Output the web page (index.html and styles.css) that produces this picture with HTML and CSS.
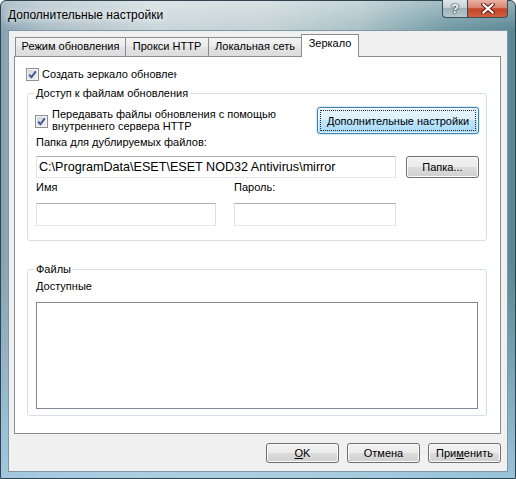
FILE: index.html
```html
<!DOCTYPE html>
<html lang="ru">
<head>
<meta charset="utf-8">
<title>Дополнительные настройки</title>
<link rel="stylesheet" href="styles.css">
</head>
<body>
<div class="window">
  <div class="titlebar">
    <span class="title">Дополнительные настройки</span>
    <div class="caption-buttons">
      <div class="cap-btn help">?</div>
      <div class="cap-btn close">
        <svg width="14" height="11" viewBox="0 0 14 11">
          <path d="M2.5 1.5 L11.5 9.5 M11.5 1.5 L2.5 9.5" stroke="#5a1a10" stroke-width="4.2" stroke-linecap="square"/>
          <path d="M2.5 1.5 L11.5 9.5 M11.5 1.5 L2.5 9.5" stroke="#ffffff" stroke-width="2.2" stroke-linecap="square"/>
        </svg>
      </div>
    </div>
  </div>
  <div class="client">
    <div class="tabs">
      <div class="tab t1">Режим обновления</div>
      <div class="tab t2">Прокси HTTP</div>
      <div class="tab t3">Локальная сеть</div>
      <div class="tab active">Зеркало</div>
    </div>
    <div class="panel">
      <label class="check top-check">
        <span class="box"><svg width="11" height="11" viewBox="0 0 11 11"><path d="M2.2 5.6 L4.4 8.2 L8.8 2.4" fill="none" stroke="#3f5690" stroke-width="1.9"/></svg></span>
        <span class="clip">Создать зеркало обновления</span>
      </label>
      <fieldset class="group access">
        <legend>Доступ к файлам обновления</legend>
        <div class="http-row">
          <label class="check multi">
            <span class="box"><svg width="11" height="11" viewBox="0 0 11 11"><path d="M2.2 5.6 L4.4 8.2 L8.8 2.4" fill="none" stroke="#3f5690" stroke-width="1.9"/></svg></span>
            <span class="multi-text">Передавать файлы обновления с помощью<br>внутреннего сервера HTTP</span>
          </label>
          <button class="btn default"><span>Дополнительные настройки</span></button>
        </div>
        <div class="label folder-label">Папка для дублируемых файлов:</div>
        <div class="path-row">
          <div class="input path">C:\ProgramData\ESET\ESET NOD32 Antivirus\mirror</div>
          <button class="btn folder">Папка...</button>
        </div>
        <div class="creds">
          <div class="field name">
            <div class="label">Имя</div>
            <div class="input cred"></div>
          </div>
          <div class="field pass">
            <div class="label">Пароль:</div>
            <div class="input cred"></div>
          </div>
        </div>
      </fieldset>
      <fieldset class="group files">
        <legend>Файлы</legend>
        <div class="label">Доступные</div>
        <div class="listbox"></div>
      </fieldset>
    </div>
    <div class="buttons">
      <button class="btn"><u>O</u>K</button>
      <button class="btn">Отмена</button>
      <button class="btn">При<u>м</u>енить</button>
    </div>
  </div>
</div>
</body>
</html>
```

FILE: styles.css
```css
* { box-sizing: border-box; }
html, body { margin: 0; padding: 0; }
body {
  width: 516px;
  height: 479px;
  overflow: hidden;
  background: #ffffff;
  font-family: "Liberation Sans", Arial, sans-serif;
  font-size: 11px;
  color: #000;
}

.window {
  width: 516px;
  height: 479px;
  display: flex;
  flex-direction: column;
  border: 1px solid #2f4350;
  border-radius: 6px 6px 0 0;
  background:
    linear-gradient(to bottom, rgba(255,255,255,0.35) 0, rgba(255,255,255,0) 30px),
    linear-gradient(to bottom, rgba(165,205,228,0) 55%, rgba(165,205,228,0.85) 100%),
    linear-gradient(to right, #87a2b2 0%, #a9bcc5 8%, #c9d6d9 30%, #c3d1d4 52%, #a8c0c6 70%, #6f98a2 87%, #588894 100%);
}

.titlebar {
  height: 29px;
  flex: none;
  display: flex;
  justify-content: space-between;
  align-items: flex-start;
}
.title {
  font-size: 12px;
  line-height: 16px;
  padding: 6px 0 0 7px;
  text-shadow: 0 0 6px rgba(255,255,255,0.9), 0 0 10px rgba(255,255,255,0.7);
}
.caption-buttons {
  display: flex;
  margin: -1px 7px 0 0;
}
.cap-btn {
  height: 18px;
  display: flex;
  align-items: center;
  justify-content: center;
  border: 1px solid #3b4d58;
  border-top: none;
}
.help {
  width: 25px;
  border-right: none;
  border-radius: 0 0 0 4px;
  background: linear-gradient(#dfe7ea, #c3d1d6 45%, #9fb3ba 50%, #b4c7cc);
  color: #fff;
  font-weight: bold;
  font-size: 13px;
  text-shadow: 0 0 1px #2c3a44, 0 0 1px #2c3a44, 0 0 2px #2c3a44;
}
.close {
  width: 41px;
  border-radius: 0 0 4px 0;
  background: linear-gradient(#eab1a2, #d98570 45%, #c4432a 52%, #d0613d);
}

.client {
  flex: 1;
  margin: 0 7px 6px 7px;
  background: #f0f0f0;
  border: 1px solid #7f96a5;
  padding: 3px 6px 8px 5px;
  display: flex;
  flex-direction: column;
}

.tabs {
  flex: none;
  height: 22px;
  margin-left: 1px;
  display: flex;
  align-items: flex-end;
  position: relative;
  z-index: 1;
}
.tab {
  height: 19px;
  border: 1px solid #898c95;
  border-bottom: none;
  background: linear-gradient(#f4f4f4, #e9e9e9 50%, #e3e3e3 50%, #dcdcdc);
  text-align: center;
  line-height: 17px;
  white-space: nowrap;
}
.tab + .tab { margin-left: -1px; }
.t1 { width: 111px; }
.t2 { width: 84px; }
.t3 { width: 94px; }
.tab.active {
  width: 58px;
  height: 23px;
  margin-bottom: -1px;
  background: #ffffff;
  line-height: 17px;
}

.panel {
  flex: none;
  height: 378px;
  background: #ffffff;
  border: 1px solid #898c95;
  padding: 10px 13px 0 12px;
  display: flex;
  flex-direction: column;
}

.check {
  display: flex;
  align-items: flex-start;
  gap: 3px;
}
.box {
  flex: none;
  width: 13px;
  height: 13px;
  border: 1px solid #8e8f8f;
  background: linear-gradient(135deg, #cdd3dc, #f3f4f6);
  box-shadow: inset 0 0 0 1px #f4f4f4;
  display: flex;
  align-items: center;
  justify-content: center;
}
.top-check {
  height: 14px;
  line-height: 14px;
  margin-left: -1px;
}
.top-check .box { margin-top: 1px; }
.clip {
  width: 135px;
  overflow: hidden;
  white-space: nowrap;
}

.group {
  margin: 5px 0 0 0;
  padding: 7px 7px 14px 8px;
  border: 1px solid #d5dfe5;
  border-radius: 3px;
  min-width: 0;
}
.group legend {
  padding: 0 2px;
  margin-left: -2px;
  line-height: 14px;
}
.files {
  margin-top: 21px;
  padding: 4px 7px 6px 8px;
}

.http-row {
  height: 27px;
  display: flex;
  justify-content: space-between;
  align-items: flex-start;
}
.multi {
  margin: 1px 0 0 -1px;
  gap: 4px;
}
.multi .box { margin-top: 7px; }
.multi-text { line-height: 12px; }

.label { line-height: 13px; white-space: nowrap; }
.folder-label { margin-top: 2px; }

.path-row {
  margin-top: 7px;
  display: flex;
  justify-content: space-between;
}
.input {
  height: 22px;
  background: #ffffff;
  border: 1px solid;
  border-color: #abadb3 #dbdfe6 #e3e9ef #e2e3ea;
  padding: 0 2px;
  line-height: 20px;
  white-space: nowrap;
  overflow: hidden;
}
.path {
  width: 360px;
  font-size: 12.6px;
}
.creds {
  margin-top: 3px;
  display: flex;
  gap: 18px;
}
.name { width: 180px; }
.pass { width: 162px; }
.cred { height: 23px; margin-top: 9px; }

.listbox {
  margin-top: 9px;
  height: 107px;
  width: 442px;
  border: 1px solid #828790;
  background: #ffffff;
}

.btn {
  font: inherit;
  color: #000;
  height: 20px;
  padding: 0;
  border: 1px solid #707070;
  border-radius: 3px;
  background: linear-gradient(#f2f2f2 0%, #ebebeb 50%, #dddddd 50%, #cfcfcf 100%);
  box-shadow: inset 0 0 0 1px #fbfbfb;
  white-space: nowrap;
}
.btn.default {
  position: relative;
  width: 162px;
  height: 27px;
  border-color: #3c7fb1;
  background: linear-gradient(#eaf6fd 0%, #d9f0fc 50%, #bee6fd 50%, #a7d9f5 100%);
  box-shadow: inset 0 0 0 1px rgba(255,255,255,0.6), 0 0 2px rgba(90,170,220,0.8);
}
.btn.default::after {
  content: "";
  position: absolute;
  left: 2px; top: 2px; right: 2px; bottom: 2px;
  border: 1px dotted #2b2b2b;
  border-radius: 1px;
}
.btn.folder {
  width: 73px;
  height: 22px;
}

.buttons {
  flex: none;
  margin-top: 9px;
  display: flex;
  justify-content: flex-end;
  gap: 8px;
}
.buttons .btn { width: 73px; }
```
